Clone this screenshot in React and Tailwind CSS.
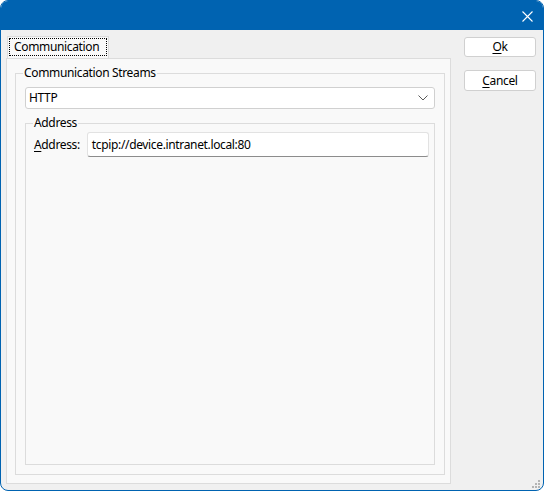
import React from 'react';

const font = { fontFamily: '"Noto Sans", "Segoe UI", sans-serif', letterSpacing: '-0.35px' };

const Mnemonic = ({ ch, rest }) => (
  <span>
    <span className="underline underline-offset-2">{ch}</span>
    {rest}
  </span>
);

const GroupBox = ({ label, className, legendClass, children }) => (
  <fieldset className={`border border-[#dcdcdc] ${className}`}>
    <legend className={`px-[1px] text-[12px] leading-[16px] text-black ${legendClass}`}>{label}</legend>
    {children}
  </fieldset>
);

export default function App() {
  return (
    <div className="w-[544px] h-[491px] bg-white" style={font}>
      <div className="relative w-[544px] h-[491px] flex flex-col overflow-hidden rounded-[8px] border border-[#0063b1] bg-[#f0f0f0]">
        {/* title bar */}
        <div className="h-[30px] -mt-px -mx-px bg-[#0063b1] flex justify-end items-center pr-[11px]">
          <svg width="11" height="11" viewBox="0 0 11 11" className="mt-[2px]">
            <path d="M0.5 0.5 L10.5 10.5 M10.5 0.5 L0.5 10.5" stroke="#fff" strokeWidth="1.1" />
          </svg>
        </div>

        <div className="flex-1 flex pl-[5px] pt-[6px] pb-[6px]">
          {/* tab control */}
          <div className="w-[445px] flex flex-col">
            <div className="ml-px w-[102px] h-[22px] border border-b-0 border-[#dcdcdc] bg-[#f9f9f9] p-[1px] pb-[2px]">
              <div className="h-full border border-dotted border-black flex items-center pl-[4px] text-[12px] text-black">
                Communication
              </div>
            </div>
            <div className="flex-1 border border-[#dcdcdc] bg-[#f9f9f9] pl-[8px] pr-[5px] pt-[6px] pb-[8px] flex flex-col">
              <GroupBox
                label="Communication Streams"
                legendClass="ml-[-2px]"
                className="flex-1 flex flex-col px-[9px] pt-[6px] pb-[9px]"
              >
                <div className="h-[22px] rounded-[3px] border border-[#d0d0d0] bg-white flex items-center justify-between pl-[3px] pr-[6px] text-[12px] text-black">
                  <span>HTTP</span>
                  <svg width="10" height="6" viewBox="0 0 10 6">
                    <path d="M0.5 0.5 L5 5 L9.5 0.5" stroke="#5a5a5a" strokeWidth="1" fill="none" />
                  </svg>
                </div>
                <GroupBox label="Address" legendClass="ml-[-1px]" className="flex-1 mt-[6px] px-[8px] pt-[1px]">
                  <div className="flex items-center gap-[7px]">
                    <span className="text-[12px] text-black">
                      <Mnemonic ch="A" rest="ddress:" />
                    </span>
                    <div className="flex-1 mr-[-3px] h-[25px] rounded-[3px] border border-[#e2e2e2] border-b-[#8c8c8c] bg-white flex items-center pl-[4px] text-[12px] text-black">
                      tcpip://device.intranet.local:80
                    </div>
                  </div>
                </GroupBox>
              </GroupBox>
            </div>
          </div>

          {/* buttons */}
          <div className="ml-[13px] flex flex-col gap-[13px] pt-px">
            <button className="w-[72px] h-[20px] rounded-[3px] border border-[#d0d0d0] bg-white text-[12px] leading-none text-black flex items-center justify-center">
              <Mnemonic ch="O" rest="k" />
            </button>
            <button className="w-[72px] h-[21px] rounded-[3px] border border-[#d0d0d0] bg-white text-[12px] leading-none text-black flex items-center justify-center">
              <Mnemonic ch="C" rest="ancel" />
            </button>
          </div>
        </div>

        {/* size grip */}
        <svg width="8" height="8" viewBox="0 0 8 8" className="absolute right-[3px] bottom-[2px]">
          <rect x="6" y="0" width="2" height="2" fill="#b4b4b4" />
          <rect x="3" y="3" width="2" height="2" fill="#b4b4b4" />
          <rect x="6" y="3" width="2" height="2" fill="#b4b4b4" />
          <rect x="0" y="6" width="2" height="2" fill="#b4b4b4" />
          <rect x="3" y="6" width="2" height="2" fill="#b4b4b4" />
          <rect x="6" y="6" width="2" height="2" fill="#b4b4b4" />
        </svg>
      </div>
    </div>
  );
}
